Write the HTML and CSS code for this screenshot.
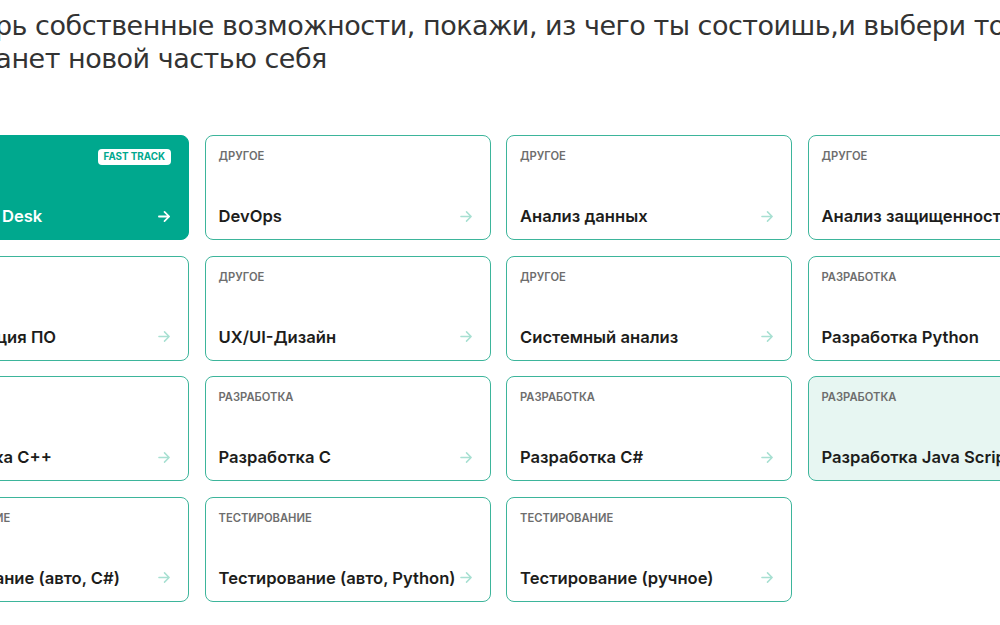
FILE: index.html
```html
<!DOCTYPE html>
<html lang="ru">
<head>
<meta charset="utf-8">
<link rel="stylesheet" href="styles.css">
</head>
<body>
<div class="page">
  <h1 class="intro">Проверь собственные возможности, покажи, из чего ты состоишь,и выбери то, что станет новой частью себя</h1>
  <div class="grid">
    <a class="card card--accent">
      <div class="card-top"><span class="cat"></span><span class="badge">FAST TRACK</span></div>
      <div class="card-bottom"><span class="title">IT Service Desk</span><svg class="arrow" viewBox="0 0 14 14"><path d="M1 7h11M7 2l5 5-5 5"/></svg></div>
    </a>
    <a class="card">
      <div class="card-top"><span class="cat">Другое</span></div>
      <div class="card-bottom"><span class="title">DevOps</span><svg class="arrow" viewBox="0 0 14 14"><path d="M1 7h11M7 2l5 5-5 5"/></svg></div>
    </a>
    <a class="card">
      <div class="card-top"><span class="cat">Другое</span></div>
      <div class="card-bottom"><span class="title">Анализ данных</span><svg class="arrow" viewBox="0 0 14 14"><path d="M1 7h11M7 2l5 5-5 5"/></svg></div>
    </a>
    <a class="card">
      <div class="card-top"><span class="cat">Другое</span></div>
      <div class="card-bottom"><span class="title">Анализ защищенности</span><svg class="arrow" viewBox="0 0 14 14"><path d="M1 7h11M7 2l5 5-5 5"/></svg></div>
    </a>

    <a class="card">
      <div class="card-top"><span class="cat">Другое</span></div>
      <div class="card-bottom"><span class="title">Локализация ПО</span><svg class="arrow" viewBox="0 0 14 14"><path d="M1 7h11M7 2l5 5-5 5"/></svg></div>
    </a>
    <a class="card">
      <div class="card-top"><span class="cat">Другое</span></div>
      <div class="card-bottom"><span class="title">UX/UI-Дизайн</span><svg class="arrow" viewBox="0 0 14 14"><path d="M1 7h11M7 2l5 5-5 5"/></svg></div>
    </a>
    <a class="card">
      <div class="card-top"><span class="cat">Другое</span></div>
      <div class="card-bottom"><span class="title">Системный анализ</span><svg class="arrow" viewBox="0 0 14 14"><path d="M1 7h11M7 2l5 5-5 5"/></svg></div>
    </a>
    <a class="card">
      <div class="card-top"><span class="cat">Разработка</span></div>
      <div class="card-bottom"><span class="title">Разработка Python</span><svg class="arrow" viewBox="0 0 14 14"><path d="M1 7h11M7 2l5 5-5 5"/></svg></div>
    </a>

    <a class="card">
      <div class="card-top"><span class="cat">Разработка</span></div>
      <div class="card-bottom"><span class="title">Разработка C++</span><svg class="arrow" viewBox="0 0 14 14"><path d="M1 7h11M7 2l5 5-5 5"/></svg></div>
    </a>
    <a class="card">
      <div class="card-top"><span class="cat">Разработка</span></div>
      <div class="card-bottom"><span class="title">Разработка C</span><svg class="arrow" viewBox="0 0 14 14"><path d="M1 7h11M7 2l5 5-5 5"/></svg></div>
    </a>
    <a class="card">
      <div class="card-top"><span class="cat">Разработка</span></div>
      <div class="card-bottom"><span class="title">Разработка C#</span><svg class="arrow" viewBox="0 0 14 14"><path d="M1 7h11M7 2l5 5-5 5"/></svg></div>
    </a>
    <a class="card card--hover">
      <div class="card-top"><span class="cat">Разработка</span></div>
      <div class="card-bottom"><span class="title">Разработка Java Script</span><svg class="arrow" viewBox="0 0 14 14"><path d="M1 7h11M7 2l5 5-5 5"/></svg></div>
    </a>

    <a class="card">
      <div class="card-top"><span class="cat">Тестирование</span></div>
      <div class="card-bottom"><span class="title">Тестирование (авто, C#)</span><svg class="arrow" viewBox="0 0 14 14"><path d="M1 7h11M7 2l5 5-5 5"/></svg></div>
    </a>
    <a class="card">
      <div class="card-top"><span class="cat">Тестирование</span></div>
      <div class="card-bottom"><span class="title">Тестирование (авто, Python)</span><svg class="arrow" viewBox="0 0 14 14"><path d="M1 7h11M7 2l5 5-5 5"/></svg></div>
    </a>
    <a class="card">
      <div class="card-top"><span class="cat">Тестирование</span></div>
      <div class="card-bottom"><span class="title">Тестирование (ручное)</span><svg class="arrow" viewBox="0 0 14 14"><path d="M1 7h11M7 2l5 5-5 5"/></svg></div>
    </a>
  </div>
</div>
</body>
</html>
```
FILE: styles.css
```css
html, body {
  margin: 0;
  padding: 0;
  background: #ffffff;
  overflow: hidden;
}

body {
  font-family: Inter, "Noto Sans", sans-serif;
  color: #1d1d1b;
}

.page {
  width: 1192px;
  margin-left: -97px;
  padding-top: 9px;
}

.intro {
  margin: 0 0 60px 8px;
  width: 1120px;
  font-family: "DejaVu Sans", Inter, sans-serif;
  font-size: 27px;
  line-height: 33px;
  font-weight: 400;
  color: #333333;
  letter-spacing: -0.5px;
}

.grid {
  display: grid;
  grid-template-columns: repeat(4, 286px);
  grid-auto-rows: 105px;
  gap: 15.5px;
}

.card {
  box-sizing: border-box;
  display: flex;
  flex-direction: column;
  justify-content: space-between;
  padding: 13px 17px 12px 13px;
  border: 1px solid #3db59b;
  border-radius: 8px;
  background: #ffffff;
  text-decoration: none;
  color: #1d1d1b;
}

.card--accent {
  background: #00a88e;
  border-color: #00a88e;
  color: #ffffff;
}

.card--hover {
  background: #e7f6f2;
}

.card-top {
  display: flex;
  justify-content: space-between;
  align-items: flex-start;
  min-height: 16px;
}

.cat {
  font-size: 11.2px;
  font-weight: 600;
  text-transform: uppercase;
  color: #6d6d6d;
  line-height: 14px;
}

.badge {
  background: #ffffff;
  color: #00a88e;
  font-size: 9.8px;
  font-weight: 700;
  line-height: 16px;
  padding: 0 6px;
  border-radius: 4px;
  margin-top: 0;
}

.card-bottom {
  display: flex;
  align-items: center;
  justify-content: space-between;
  gap: 4px;
}

.title {
  font-size: 16.6px;
  font-weight: 600;
  line-height: 22px;
  white-space: nowrap;
}

.arrow {
  width: 13px;
  height: 13px;
  flex: none;
  fill: none;
  stroke: #a8e0d2;
  stroke-width: 1.6;
  stroke-linecap: round;
  stroke-linejoin: round;
}

.card--accent .arrow {
  stroke: #ffffff;
  stroke-width: 1.9;
}
```
